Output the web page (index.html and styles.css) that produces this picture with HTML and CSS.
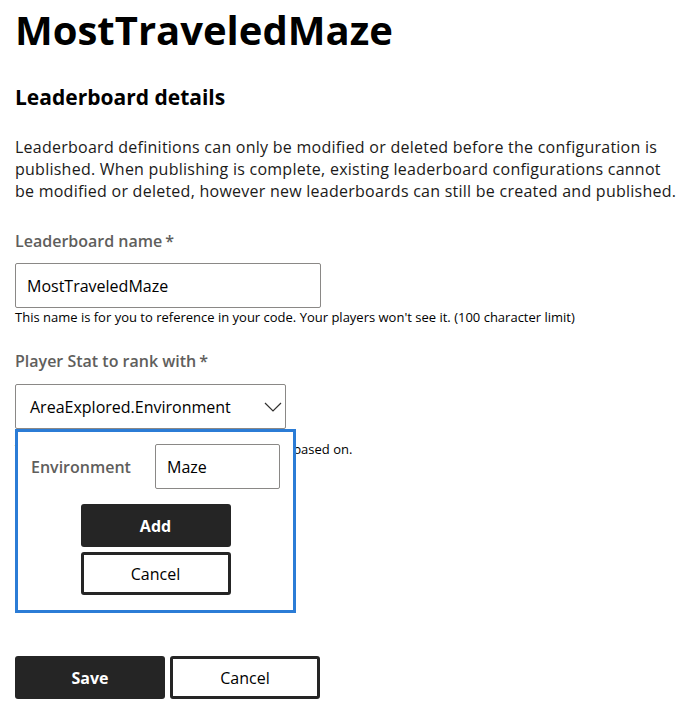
FILE: index.html
```html
<!DOCTYPE html>
<html lang="en">
<head>
<meta charset="utf-8">
<title>MostTraveledMaze</title>
<link rel="stylesheet" href="styles.css">
</head>
<body>
<main class="page">
  <h1 class="title">MostTraveledMaze</h1>
  <h2 class="section-title">Leaderboard details</h2>
  <p class="intro">Leaderboard definitions can only be modified or deleted before the configuration is published. When publishing is complete, existing leaderboard configurations cannot be modified or deleted, however new leaderboards can still be created and published.</p>

  <div class="field">
    <label class="field-label">Leaderboard name<span class="req">*</span></label>
    <div class="text-input name-input">MostTraveledMaze</div>
    <div class="hint">This name is for you to reference in your code. Your players won't see it. (100 character limit)</div>
  </div>

  <div class="field stat-field">
    <label class="field-label">Player Stat to rank with<span class="req">*</span></label>
    <div class="select">
      <span class="select-value">AreaExplored.Environment</span>
      <svg class="chevron" width="18" height="10" viewBox="0 0 18 10"><path d="M1 1 L9 9 L17 1" fill="none" stroke="#323130" stroke-width="1.2"/></svg>
    </div>
    <div class="hint hint-stat">The stat that the leaderboard rankings will be based on.</div>

    <div class="popup">
      <div class="popup-row">
        <span class="popup-label">Environment</span>
        <div class="text-input popup-input">Maze</div>
      </div>
      <div class="popup-actions">
        <button class="btn btn-primary">Add</button>
        <button class="btn btn-outline">Cancel</button>
      </div>
    </div>
  </div>

  <div class="footer-actions">
    <button class="btn btn-primary">Save</button>
    <button class="btn btn-outline">Cancel</button>
  </div>
</main>
</body>
</html>
```
FILE: styles.css
```css
* { box-sizing: border-box; }
body {
  margin: 0;
  background: #fff;
  color: #000;
  font-family: "Open Sans", "Noto Sans", sans-serif;
}
.page {
  padding: 0 7px 0 15px;
}
.title {
  margin: 0;
  padding-top: 2px;
  font-size: 40px;
  font-weight: 700;
  line-height: 56px;
}
.section-title {
  margin: 25px 0 0;
  font-size: 21px;
  font-weight: 700;
  line-height: 28px;
}
.intro {
  margin: 25px 0 0;
  font-size: 16px;
  line-height: 22px;
  color: #1b1a19;
  letter-spacing: 0.25px;
}
.field { margin-top: 28px; }
.field-label {
  display: block;
  font-size: 16px;
  font-weight: 600;
  line-height: 22px;
  color: #605e5c;
}
.req { margin-left: 3px; }
.text-input {
  border: 1px solid #8a8886;
  border-radius: 2px;
  background: #fff;
  font-size: 16px;
  color: #000;
  display: flex;
  align-items: center;
}
.name-input {
  margin-top: 11px;
  width: 306px;
  height: 45px;
  padding-left: 11px;
}
.hint {
  margin-top: 1px;
  font-size: 13px;
  line-height: 16px;
  color: #000;
  white-space: nowrap;
}
.stat-field {
  position: relative;
  margin-top: 25px;
}
.select {
  margin-top: 12px;
  width: 271px;
  height: 45px;
  border: 1px solid #8a8886;
  border-radius: 2px;
  display: flex;
  align-items: center;
  justify-content: space-between;
  padding: 0 3px 0 14px;
  font-size: 16px;
}
.chevron { display: block; }
.hint-stat {
  margin-top: 12px;
}
.popup {
  position: absolute;
  left: 0;
  top: 79px;
  width: 281px;
  height: 184px;
  background: #fff;
  border: 3px solid #2b7cd6;
  padding: 12px 13px 0 13px;
}
.popup-row {
  display: flex;
  align-items: center;
  justify-content: space-between;
}
.popup-label {
  font-size: 16px;
  font-weight: 600;
  color: #605e5c;
}
.popup-input {
  width: 125px;
  height: 45px;
  padding-left: 11px;
}
.popup-actions {
  margin-top: 15px;
  display: flex;
  flex-direction: column;
  align-items: center;
  gap: 5px;
}
.btn {
  width: 150px;
  height: 43px;
  border-radius: 3px;
  font-family: inherit;
  font-size: 16px;
  cursor: pointer;
}
.btn-primary {
  background: #252525;
  color: #fff;
  border: none;
  font-weight: 700;
}
.btn-outline {
  background: #fff;
  color: #000;
  border: 3px solid #252525;
}
.footer-actions {
  margin-top: 199px;
  display: flex;
  gap: 5px;
}
```
